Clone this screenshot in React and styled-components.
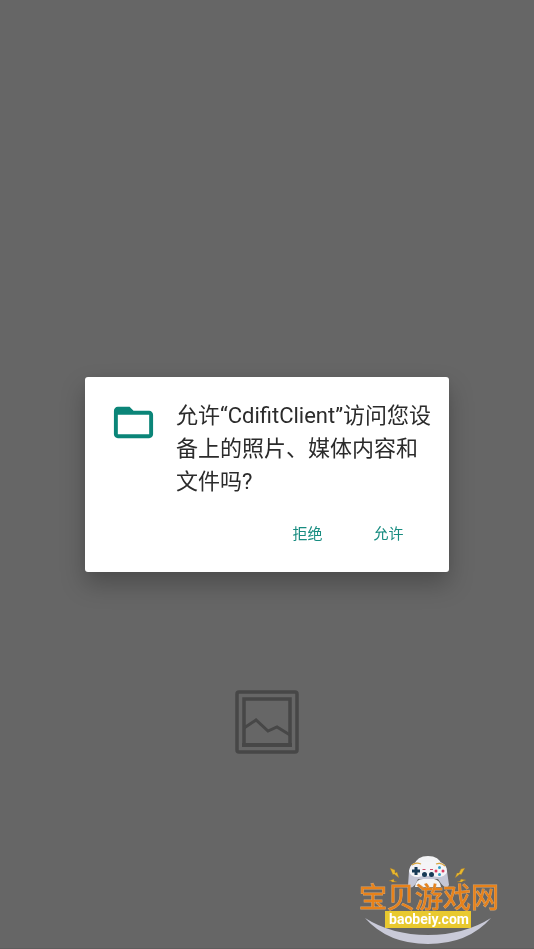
import React, { useState } from "react";
import styled, { createGlobalStyle } from "styled-components";

const GlobalStyle = createGlobalStyle`
  * {
    box-sizing: border-box;
  }

  body {
    margin: 0;
    background: #666666;
    font-family: Roboto, "Noto Sans CJK SC", sans-serif;
  }
`;

const Screen = styled.main`
  display: flex;
  flex-direction: column;
  align-items: center;
  justify-content: flex-end;
  min-height: 100vh;
  padding-bottom: 191px;
  border-bottom: 1px solid #5e5e5e;
`;

const PlaceholderIcon = styled.svg`
  display: block;
  width: 70px;
  height: 70px;
`;

const Overlay = styled.div`
  position: fixed;
  inset: 0;
  display: flex;
  align-items: center;
  justify-content: center;
`;

const Dialog = styled.section`
  width: 68.2%;
  padding: 22px 16px 18px 25px;
  background: #ffffff;
  border-radius: 3px;
  box-shadow: 0 12px 24px rgba(0, 0, 0, 0.25), 0 0 8px rgba(0, 0, 0, 0.06);
`;

const DialogBody = styled.div`
  display: flex;
  align-items: flex-start;
  gap: 19px;
`;

const FolderIcon = styled.svg`
  flex: none;
  width: 47px;
  height: 47px;
  fill: #0b8578;
`;

const Message = styled.p`
  flex: 1;
  margin: 0;
  color: #2b2b2b;
  font-size: 22px;
  line-height: 33px;
`;

const Actions = styled.div`
  display: flex;
  justify-content: flex-end;
  gap: 8px;
  margin-top: 12px;
  padding-right: 8px;
`;

const ActionButton = styled.button`
  min-width: 73px;
  height: 44px;
  padding: 0 12px;
  border: none;
  background: transparent;
  color: #178c80;
  font-family: inherit;
  font-size: 15px;
  cursor: pointer;
`;

const Watermark = styled.svg`
  position: fixed;
  right: 24px;
  bottom: 0;
  width: 160px;
  height: 104px;
  pointer-events: none;
`;

const SiteName = styled.text`
  font-family: "Noto Sans CJK SC", sans-serif;
  font-size: 28px;
  font-weight: 400;
  fill: #e8821a;
  stroke: #dba468;
  stroke-width: 1px;
  paint-order: stroke;
`;

const SiteAddress = styled.text`
  font-family: Roboto, sans-serif;
  font-size: 14px;
  font-weight: 700;
  fill: #ffffff;
`;

const Logo = () => (
  <Watermark viewBox="0 0 160 104" role="img" aria-label="宝贝游戏网 baobeiy.com">
    <path d="M15 73Q42 90 78 90Q114 90 141 73Q118 99 78 99Q38 99 15 73z" fill="#c9cad8" />

    {/* Gamepad */}
    <path d="M64 20Q67 11 78 11T92 20z" fill="#f3f3f5" />
    <path
      d="M59 26Q60 17 69 17H88Q96 17 97 26L99 40Q96 47 88 34H68Q63 46 58 41z"
      fill="#c5c7d6"
    />
    <path
      d="M59 26Q60 18 69 17H88Q97 18 97 27Q95 32 88 32L82 31H74L68 32Q60 32 59 26z"
      fill="#f4f4f7"
    />
    <path d="M62 20q4-3 9-1M86 19q5-2 9 2" fill="none" stroke="#d8a53e" strokeWidth="1.3" />
    <path d="M66 22v8M62 26h8" stroke="#173a55" strokeWidth="3" />
    <path d="M72.5 24.5h3M80 24.5h3" stroke="#d24968" strokeWidth="1.2" />
    <circle cx="74.5" cy="29.5" r="2.5" fill="#173a55" />
    <circle cx="81.5" cy="29.5" r="2.5" fill="#173a55" />
    <circle cx="89.5" cy="22.5" r="1.5" fill="#2d9cc3" />
    <circle cx="93" cy="26" r="1.5" fill="#d83f62" />
    <circle cx="86" cy="26" r="1.5" fill="#d83f62" />
    <circle cx="89.5" cy="29.5" r="1.5" fill="#2d9cc3" />
    <path d="M65 42Q66 34 73 34H84Q90 35 91 42z" fill="#f4f4f7" />

    {/* Sparks */}
    <g fill="#e9b92d" stroke="#98702f" strokeWidth="0.4">
      <path d="M40 23l5 2 0 3 2-1 2 6-5-4-1 1z" />
      <path d="M39 36l5-2 0 2 3 1-5 0-1-1z" />
      <path d="M115 23l-4 1-2 4-2 0-2 5 5-4 1 1z" />
      <path d="M116 35l-5-1-1 2-3 1 5 0 1-1z" />
    </g>

    <rect x="35" y="66" width="86" height="17" fill="#e9c92f" />
    <SiteName x="9" y="63">宝贝游戏网</SiteName>
    <SiteAddress x="79" y="79" textAnchor="middle">baobeiy.com</SiteAddress>
  </Watermark>
);

const App = () => {
  const [open, setOpen] = useState(true);

  const close = () => setOpen(false);

  return (
    <>
      <GlobalStyle />
      <Screen>
        <PlaceholderIcon viewBox="0 0 70 70" fill="none" stroke="#474747" aria-hidden="true">
          <rect x="5" y="5" width="60" height="60" rx="2" strokeWidth="3.5" />
          <path d="M12 12H58V58H12z" strokeWidth="3.5" />
          <path d="M12 41l12-8 12 11 9-4 13 8" strokeWidth="3" />
          <path d="M10 58H60" strokeWidth="4" />
        </PlaceholderIcon>
      </Screen>
      <Logo />
      {open && (
        <Overlay>
          <Dialog role="dialog" aria-modal="true" aria-labelledby="permission-message">
            <DialogBody>
              <FolderIcon viewBox="0 0 24 24" aria-hidden="true">
                <path d="M20 6h-8l-2-2H4c-1.1 0-1.99.9-1.99 2L2 18c0 1.1.9 2 2 2h16c1.1 0 2-.9 2-2V8c0-1.1-.9-2-2-2zm0 12H4V8h16v10z" />
              </FolderIcon>
              <Message id="permission-message">
                允许“CdifitClient”访问您设备上的照片、媒体内容和文件吗?
              </Message>
            </DialogBody>
            <Actions>
              <ActionButton type="button" onClick={close}>拒绝</ActionButton>
              <ActionButton type="button" onClick={close}>允许</ActionButton>
            </Actions>
          </Dialog>
        </Overlay>
      )}
    </>
  );
};

export default App;
